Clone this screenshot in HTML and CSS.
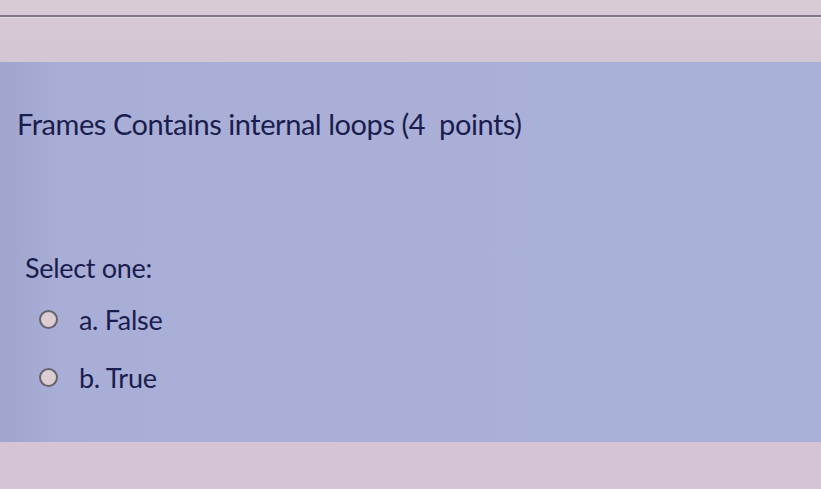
FILE: index.html
```html
<!DOCTYPE html>
<html lang="en">
<head>
  <meta charset="UTF-8" />
  <title>Quiz question</title>
  <link rel="stylesheet" href="styles.css">
</head>
<body>
  <div class="top-bar">
    <div class="rule"></div>
  </div>

  <div class="question">
    <p class="qtext">Frames Contains internal loops (4&nbsp; points)</p>

    <div class="answer">
      <p class="prompt">Select one:</p>
      <label class="option">
        <input type="radio" name="q1" />
        <span>a. False</span>
      </label>
      <label class="option">
        <input type="radio" name="q1" />
        <span>b. True</span>
      </label>
    </div>
  </div>

  <div class="bottom-area"></div>
</body>
</html>
```

FILE: styles.css
```css
* {
  box-sizing: border-box;
  margin: 0;
  padding: 0;
  font-family: Lato, 'Open Sans', sans-serif;
}

body {
  width: 821px;
  height: 489px;
  overflow: hidden;
  background: #d6c9d5;
  color: #1b1d4e;
}

.top-bar {
  height: 62px;
  padding-top: 15px;
  background: linear-gradient(180deg, #d8cbd6, #d3c6d3);
}

.rule {
  height: 3px;
  background: #7f7789;
  border-bottom: 1px solid #e6dce6;
}

.question {
  height: 380px;
  padding: 40px 0 0 17px;
  background: linear-gradient(90deg, #9fa5cc 0, #a9aed6 60px, #aab1d8 100%);
}

.qtext {
  font-size: 29px;
  letter-spacing: -0.45px;
  line-height: 44px;
}

.answer {
  margin-top: 102px;
  padding-left: 8px;
}

.prompt {
  font-size: 27px;
  line-height: 40px;
  letter-spacing: -0.3px;
  margin-bottom: 2px;
}

/* radio row: circle + label */
.option {
  display: flex;
  align-items: center;
  gap: 21px;
  padding-left: 14px;
  height: 58px;
  font-size: 27px;
  letter-spacing: -0.3px;
}

.option input {
  appearance: none;
  width: 19px;
  height: 19px;
  border: 2px solid #66626f;
  border-radius: 50%;
  background: #dccdd3;
}

.bottom-area {
  height: 47px;
  background: #d4c4d6;
}
```
